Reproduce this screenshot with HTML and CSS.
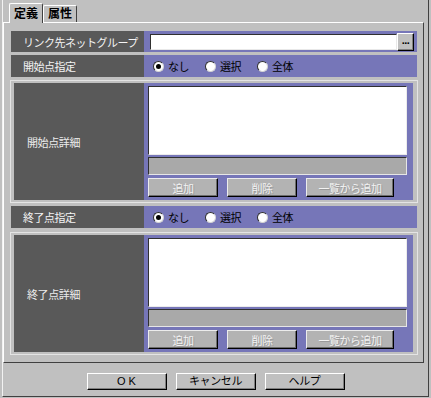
FILE: index.html
```html
<!DOCTYPE html>
<html lang="ja">
<head>
  <meta charset="UTF-8">
  <title>リンク設定</title>
  <link rel="stylesheet" href="styles.css">
</head>
<body>
  <div class="window">
    <div class="tabs">
      <div class="tab tab-active">定義</div>
      <div class="tab">属性</div>
    </div>

    <div class="panel">
      <div class="row row-link">
        <div class="label">リンク先ネットグループ</div>
        <div class="field">
          <input class="text-input" type="text">
          <button class="browse">...</button>
        </div>
      </div>

      <div class="row">
        <div class="label">開始点指定</div>
        <div class="field radios">
          <label class="radio"><span class="radio-mark checked"></span>なし</label>
          <label class="radio"><span class="radio-mark"></span>選択</label>
          <label class="radio"><span class="radio-mark"></span>全体</label>
        </div>
      </div>

      <div class="detail">
        <div class="detail-label">開始点詳細</div>
        <div class="detail-body">
          <textarea class="list"></textarea>
          <div class="list-entry"></div>
          <div class="detail-buttons">
            <button class="btn-small" disabled>追加</button>
            <button class="btn-small" disabled>削除</button>
            <button class="btn-small btn-wide" disabled>一覧から追加</button>
          </div>
        </div>
      </div>

      <div class="row">
        <div class="label">終了点指定</div>
        <div class="field radios">
          <label class="radio"><span class="radio-mark checked"></span>なし</label>
          <label class="radio"><span class="radio-mark"></span>選択</label>
          <label class="radio"><span class="radio-mark"></span>全体</label>
        </div>
      </div>

      <div class="detail detail-end">
        <div class="detail-label">終了点詳細</div>
        <div class="detail-body">
          <textarea class="list"></textarea>
          <div class="list-entry"></div>
          <div class="detail-buttons">
            <button class="btn-small" disabled>追加</button>
            <button class="btn-small" disabled>削除</button>
            <button class="btn-small btn-wide" disabled>一覧から追加</button>
          </div>
        </div>
      </div>
    </div>

    <div class="dialog-buttons">
      <button class="dialog-btn btn-ok">OK</button>
      <button class="dialog-btn">キャンセル</button>
      <button class="dialog-btn">ヘルプ</button>
    </div>
  </div>
</body>
</html>
```

FILE: styles.css
```css
:root {
  --face: #c0c0c0;
  --purple: #7676b8;
  --dark-cell: #595959;
  --light-edge: #ffffff;
  --dark-edge: #404040;
}

* {
  margin: 0;
  padding: 0;
  box-sizing: border-box;
}

body {
  background: var(--face);
  font-family: "Liberation Sans", "Noto Sans CJK JP", sans-serif;
  font-size: 11px;
  color: #000;
}

.window {
  width: 427px;
  height: 397px;
  margin-left: 2px;
  border-left: 1px solid #f2f2f2;
  border-right: 1px solid var(--dark-edge);
  border-bottom: 1px solid var(--dark-edge);
}

/* Tabs */
.tabs {
  display: flex;
  align-items: flex-end;
  height: 22px;
  padding-left: 6px;
}

.tab {
  width: 34px;
  height: 17px;
  border: 1px solid;
  border-color: var(--light-edge) var(--dark-edge) transparent var(--light-edge);
  border-bottom: none;
  border-radius: 2px 2px 0 0;
  font-size: 12px;
  font-weight: bold;
  line-height: 1;
  display: flex;
  align-items: center;
  justify-content: center;
}

.tab-active {
  height: 20px;
  margin-bottom: -1px;
  position: relative;
  z-index: 1;
  background: var(--face);
}

/* Panel */
.panel {
  width: 421px;
  height: 341px;
  border: 1px solid;
  border-color: var(--light-edge) var(--dark-edge) var(--dark-edge) var(--light-edge);
  padding: 8px 4px 0 6px;
  display: flex;
  flex-direction: column;
  gap: 3px;
}

.row {
  display: flex;
  width: 406px;
  height: 22px;
  margin-left: 1px;
}

.row-link {
  height: 21px;
}

.label {
  width: 133px;
  background: var(--dark-cell);
  color: #f4f4f4;
  padding-left: 12px;
  display: flex;
  align-items: center;
  letter-spacing: -0.5px;
  white-space: nowrap;
}

.field {
  flex: 1;
  background: var(--purple);
  display: flex;
  align-items: center;
  padding-left: 6px;
}

.text-input {
  width: 247px;
  height: 16px;
  background: #fff;
  border: 1px solid;
  border-color: #303030 #e8e8e8 #e8e8e8 #303030;
  outline: none;
}

.browse {
  width: 17px;
  height: 18px;
  background: var(--face);
  border: 1px solid;
  border-color: var(--light-edge) #000 #000 var(--light-edge);
  box-shadow: inset -1px -1px #808080;
  font-family: inherit;
  font-size: 11px;
  font-weight: bold;
  line-height: 1;
  letter-spacing: -0.5px;
  padding-bottom: 2px;
}

/* Radio groups */
.radios {
  padding-left: 9px;
  gap: 16px;
}

.radio {
  display: flex;
  align-items: center;
  gap: 4px;
  letter-spacing: -0.5px;
}

.radio-mark {
  width: 11px;
  height: 11px;
  border-radius: 50%;
  background: #fff;
  border: 1px solid;
  border-color: #303030 #d4d4d4 #d4d4d4 #303030;
  display: flex;
  align-items: center;
  justify-content: center;
}

.radio-mark.checked::after {
  content: "";
  width: 5px;
  height: 5px;
  border-radius: 50%;
  background: #000;
}

/* Start / end detail frames */
.detail {
  display: flex;
  width: 408px;
  height: 123px;
  border: 1px solid #e4e4e4;
  padding: 2px 4px 2px 3px;
}

.detail-end {
  margin-top: 1px;
}

.detail-label {
  width: 130px;
  background: var(--dark-cell);
  color: #ececec;
  padding-left: 13px;
  display: flex;
  align-items: center;
  letter-spacing: -0.4px;
}

.detail-body {
  flex: 1;
  background: var(--purple);
  padding: 3px 6px 2px 4px;
  display: flex;
  flex-direction: column;
}

.list {
  width: 100%;
  height: 69px;
  resize: none;
  background: #fff;
  border: 1px solid;
  border-color: #303030 #ececec #ececec #303030;
  outline: none;
}

.list-entry {
  height: 18px;
  margin-top: 2px;
  background: #a9a9a9;
  border: 1px solid;
  border-color: #303030 #e6e6e6 #e6e6e6 #303030;
}

.detail-buttons {
  display: flex;
  gap: 9px;
  margin-top: 3px;
}

.btn-small {
  width: 70px;
  height: 19px;
  background: #b3b3b3;
  border: 1px solid;
  border-color: #ececec #000 #000 #ececec;
  box-shadow: inset -1px -1px #6c6c6c;
  font-family: inherit;
  font-size: 11px;
  letter-spacing: -0.5px;
  color: #f2f2f2;
  text-shadow: 1px 1px 0 #9a9a9a;
}

.btn-wide {
  width: 88px;
}

/* Dialog buttons */
.dialog-buttons {
  display: flex;
  justify-content: center;
  gap: 9px;
  padding-top: 10px;
}

.dialog-btn {
  width: 80px;
  height: 17px;
  background: var(--face);
  border: 1px solid;
  border-color: var(--light-edge) #000 #000 var(--light-edge);
  box-shadow: inset -1px -1px #808080;
  font-family: inherit;
  font-size: 11px;
  letter-spacing: -0.4px;
  color: #000;
  line-height: 1;
}

.btn-ok {
  letter-spacing: 3px;
  padding-left: 3px;
}
```
